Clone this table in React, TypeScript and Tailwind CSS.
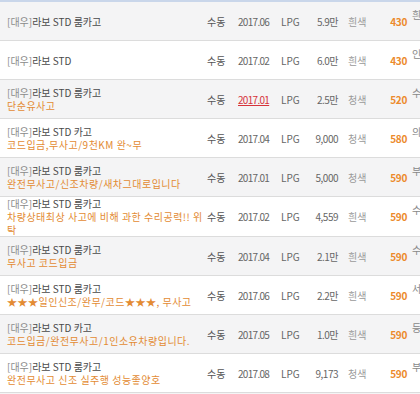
import React from "react";

type Row = {
  name: string;
  sub?: React.ReactNode;
  date: string;
  red?: boolean;
  km: string;
  color: string;
  price: string;
  region: string;
};

const rows: Row[] = [
  { name: "라보 STD 룸카고", date: "2017.06", km: "5.9만", color: "흰색", price: "430", region: "흰색" },
  { name: "라보 STD", date: "2017.02", km: "6.0만", color: "흰색", price: "430", region: "인천" },
  { name: "라보 STD 룸카고", sub: "단순유사고", date: "2017.01", red: true, km: "2.5만", color: "청색", price: "520", region: "수원" },
  { name: "라보 STD 카고", sub: "코드입금,무사고/9천KM 완~무", date: "2017.04", km: "9,000", color: "청색", price: "580", region: "의정부" },
  { name: "라보 STD 룸카고", sub: "완전무사고/신조차량/새차그대로입니다", date: "2017.01", km: "5,000", color: "청색", price: "590", region: "부산" },
  {
    name: "라보 STD 룸카고",
    sub: (
      <>
        차량상태최상 사고에 비해 과한 수리공력!! 위
        <br />탁
      </>
    ),
    date: "2017.02",
    km: "4,559",
    color: "흰색",
    price: "590",
    region: "수원",
  },
  { name: "라보 STD 룸카고", sub: "무사고 코드입금", date: "2017.04", km: "2.1만", color: "흰색", price: "590", region: "수원" },
  { name: "라보 STD 룸카고", sub: "★★★일인신조/완무/코드★★★, 무사고", date: "2017.06", km: "2.2만", color: "흰색", price: "590", region: "서울" },
  { name: "라보 STD 카고", sub: "코드입금/완전무사고/1인소유차량입니다.", date: "2017.05", km: "1.0만", color: "흰색", price: "590", region: "등록" },
  { name: "라보 STD 룸카고", sub: "완전무사고 신조 실주행 성능좋양호", date: "2017.08", km: "9,173", color: "청색", price: "590", region: "부천" },
];

export default function App() {
  return (
    <div
      className="w-[420px] h-[394px] overflow-hidden bg-white"
      style={{ fontFamily: '"Noto Sans CJK KR", "Noto Sans", sans-serif' }}
    >
      <div className="h-[2px] bg-[#c9d6ea]" />
      {rows.map((r, i) => (
        <div
          key={i}
          className={`flex items-center min-h-[39px] border-b border-[#dcdcdc] text-[10px] leading-[13px] ${
            i % 2 === 0 ? "bg-[#f4f4f5]" : "bg-white"
          }`}
        >
          <div className="w-[207px] shrink-0 pl-[7px]">
            <div className="text-[#4a4a4a] whitespace-nowrap">
              <span className="text-[#8a8a8a]">[대우]</span>
              {r.name}
            </div>
            {r.sub && <div className="text-[#e38b33] tracking-[0.5px]">{r.sub}</div>}
          </div>
          <div className="w-[31px] shrink-0 text-[#555]">수동</div>
          <div className={`w-[43px] shrink-0 tracking-[-0.7px] ${r.red ? "text-[#d6333b] underline" : "text-[#666]"}`}>
            {r.date}
          </div>
          <div className="w-[28px] shrink-0 text-[#666]">LPG</div>
          <div className="w-[29px] shrink-0 text-right text-[#666] tracking-[-0.5px] whitespace-nowrap">{r.km}</div>
          <div className="w-[42px] shrink-0 pl-[10px] text-[#9a9a9a]">{r.color}</div>
          <div className="w-[27px] shrink-0 text-right font-bold text-[#ec8a2c] tracking-[-0.3px]">{r.price}</div>
          <div className="pl-[5px] self-start pt-[6px] text-[#888] whitespace-nowrap">{r.region}</div>
        </div>
      ))}
      <div className="h-[10px] bg-[#f4f4f5]" />
    </div>
  );
}
